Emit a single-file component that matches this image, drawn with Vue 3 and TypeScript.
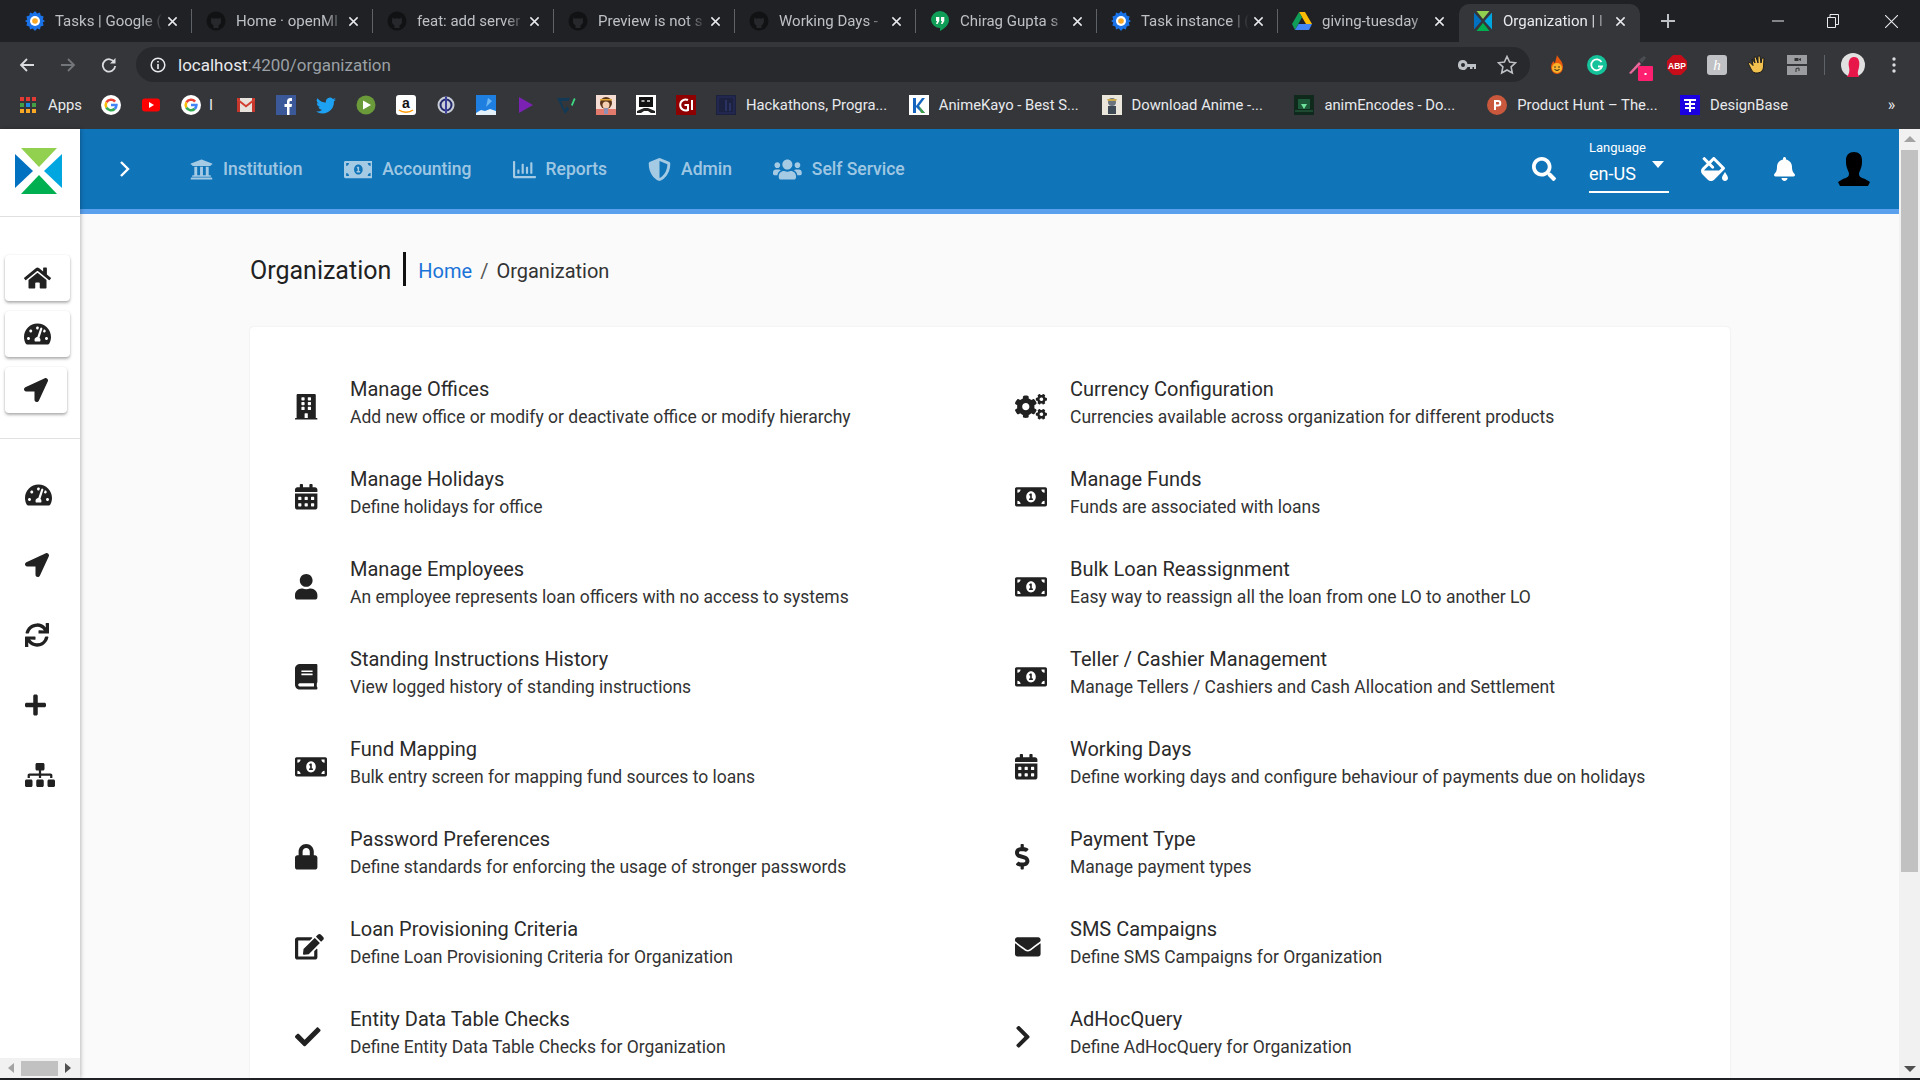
<script setup lang="ts">
import { h } from 'vue'

const paths: Record<string, [number, string]> = {
  home: [576, 'M280.37 148.26L96 300.11V464a16 16 0 0 0 16 16l112.06-.29a16 16 0 0 0 15.92-16V368a16 16 0 0 1 16-16h64a16 16 0 0 1 16 16v95.64a16 16 0 0 0 16 16.05L464 480a16 16 0 0 0 16-16V300L295.67 148.26a12.19 12.19 0 0 0-15.3 0zM571.6 251.47L488 182.56V44.05a12 12 0 0 0-12-12h-56a12 12 0 0 0-12 12v72.61L318.47 43a48 48 0 0 0-61 0L4.34 251.47a12 12 0 0 0-1.6 16.9l25.5 31A12 12 0 0 0 45.15 301l235.22-193.74a12.19 12.19 0 0 1 15.3 0L530.9 301a12 12 0 0 0 16.9-1.6l25.5-31a12 12 0 0 0-1.7-16.93z'],
  gauge: [576, 'M288 32C128.94 32 0 160.94 0 320c0 52.8 14.25 102.26 39.06 144.8 5.61 9.62 16.3 15.2 27.44 15.2h443c11.14 0 21.83-5.58 27.44-15.2C561.75 422.26 576 372.8 576 320c0-159.06-128.94-288-288-288zm0 64c14.71 0 26.58 10.13 30.32 23.65-1.11 2.26-2.64 4.23-3.45 6.67l-9.22 27.67c-5.13 3.49-10.97 6.01-17.64 6.01-17.67 0-32-14.33-32-32S270.33 96 288 96zM96 384c-17.67 0-32-14.33-32-32s14.33-32 32-32 32 14.33 32 32-14.33 32-32 32zm48-160c-17.67 0-32-14.33-32-32s14.33-32 32-32 32 14.33 32 32-14.33 32-32 32zm246.77-72.41l-61.33 184C343.13 347.33 352 364.54 352 384c0 11.72-3.38 22.55-8.88 32H232.88c-5.5-9.45-8.88-20.28-8.88-32 0-33.94 26.5-61.43 59.9-63.59l61.34-184.01c4.17-12.56 17.73-19.45 30.36-15.17 12.57 4.19 19.35 17.79 15.17 30.36zm14.66 57.2l15.52-46.55c3.47-1.29 7.13-2.23 11.05-2.23 17.67 0 32 14.33 32 32s-14.33 32-32 32c-11.38-.01-20.89-6.28-26.57-15.22zM480 384c-17.67 0-32-14.33-32-32s14.33-32 32-32 32 14.33 32 32-14.33 32-32 32z'],
  arrow: [512, 'M444.52 3.52L28.74 195.42c-47.97 22.39-31.98 92.75 19.19 92.75h175.91v175.91c0 51.17 70.36 67.17 92.75 19.19l191.9-415.78c15.99-38.39-25.59-79.97-63.97-63.97z'],
  sync: [512, 'M440.65 12.57l4 82.77A247.16 247.16 0 0 0 255.83 8C134.73 8 33.91 94.92 12.29 209.82A12 12 0 0 0 24.09 224h49.05a12 12 0 0 0 11.67-9.26 175.91 175.91 0 0 1 317-56.94l-101.46-4.86a12 12 0 0 0-12.57 12v47.41a12 12 0 0 0 12 12H500a12 12 0 0 0 12-12V12a12 12 0 0 0-12-12h-47.37a12 12 0 0 0-11.98 12.57zM255.83 432a175.61 175.61 0 0 1-146-77.8l101.8 4.87a12 12 0 0 0 12.57-12v-47.4a12 12 0 0 0-12-12H12a12 12 0 0 0-12 12V500a12 12 0 0 0 12 12h47.35a12 12 0 0 0 12-12.6l-4.15-82.57A247.17 247.17 0 0 0 255.83 504c121.11 0 221.93-86.92 243.55-201.82a12 12 0 0 0-11.8-14.18h-49.05a12 12 0 0 0-11.67 9.26A175.86 175.86 0 0 1 255.83 432z'],
  plus: [448, 'M416 208H272V64c0-17.67-14.33-32-32-32h-32c-17.67 0-32 14.33-32 32v144H32c-17.67 0-32 14.33-32 32v32c0 17.67 14.33 32 32 32h144v144c0 17.67 14.33 32 32 32h32c17.67 0 32-14.33 32-32V304h144c17.67 0 32-14.33 32-32v-32c0-17.67-14.33-32-32-32z'],
  sitemap: [640, 'M128 352H32c-17.67 0-32 14.33-32 32v96c0 17.67 14.33 32 32 32h96c17.67 0 32-14.33 32-32v-96c0-17.67-14.33-32-32-32zm-24-80h192v48h48v-48h192v48h48v-57.59c0-21.17-17.23-38.41-38.41-38.41H344v-64h40c17.67 0 32-14.33 32-32V32c0-17.67-14.33-32-32-32H256c-17.67 0-32 14.33-32 32v96c0 17.67 14.33 32 32 32h40v64H94.41C73.23 224 56 241.23 56 262.41V320h48v-48zm264 80h-96c-17.67 0-32 14.33-32 32v96c0 17.67 14.33 32 32 32h96c17.67 0 32-14.33 32-32v-96c0-17.67-14.33-32-32-32zm240 0h-96c-17.67 0-32 14.33-32 32v96c0 17.67 14.33 32 32 32h96c17.67 0 32-14.33 32-32v-96c0-17.67-14.33-32-32-32z'],
  university: [512, 'M496 128v16a8 8 0 0 1-8 8h-24v12c0 6.627-5.373 12-12 12H60c-6.627 0-12-5.373-12-12v-12H24a8 8 0 0 1-8-8v-16a8 8 0 0 1 4.941-7.392l232-88a7.996 7.996 0 0 1 6.118 0l232 88A8 8 0 0 1 496 128zm-24 304H40c-13.255 0-24 10.745-24 24v16a8 8 0 0 0 8 8h464a8 8 0 0 0 8-8v-16c0-13.255-10.745-24-24-24zM96 192v192H60c-6.627 0-12 5.373-12 12v20h416v-20c0-6.627-5.373-12-12-12h-36V192h-64v192h-64V192h-64v192h-64V192H96z'],
  money: [640, 'M352 288h-16v-88c0-4.42-3.58-8-8-8h-13.58c-4.74 0-9.37 1.4-13.31 4.03l-15.33 10.22a7.994 7.994 0 0 0-2.22 11.09l8.88 13.31a7.994 7.994 0 0 0 11.09 2.22l.47-.31V288h-16c-4.42 0-8 3.58-8 8v16c0 4.42 3.58 8 8 8h64c4.42 0 8-3.58 8-8v-16c0-4.42-3.58-8-8-8zM608 64H32C14.33 64 0 78.33 0 96v320c0 17.67 14.33 32 32 32h576c17.67 0 32-14.33 32-32V96c0-17.67-14.33-32-32-32zM48 400v-64c35.35 0 64 28.65 64 64H48zm0-224v-64h64c0 35.35-28.65 64-64 64zm272 192c-53.02 0-96-50.15-96-112 0-61.86 42.98-112 96-112s96 50.14 96 112c0 61.87-43 112-96 112zm272 32h-64c0-35.35 28.65-64 64-64v64zm0-224c-35.35 0-64-28.65-64-64h64v64z'],
  chart: [512, 'M396.8 352h22.4c6.4 0 12.8-6.4 12.8-12.8V108.8c0-6.4-6.4-12.8-12.8-12.8h-22.4c-6.4 0-12.8 6.4-12.8 12.8v230.4c0 6.4 6.4 12.8 12.8 12.8zm-192 0h22.4c6.4 0 12.8-6.4 12.8-12.8V140.8c0-6.4-6.4-12.8-12.8-12.8h-22.4c-6.4 0-12.8 6.4-12.8 12.8v198.4c0 6.4 6.4 12.8 12.8 12.8zm96 0h22.4c6.4 0 12.8-6.4 12.8-12.8V204.8c0-6.4-6.4-12.8-12.8-12.8h-22.4c-6.4 0-12.8 6.4-12.8 12.8v134.4c0 6.4 6.4 12.8 12.8 12.8zM496 400H48V80c0-8.84-7.16-16-16-16H16C7.16 64 0 71.16 0 80v336c0 17.67 14.33 32 32 32h464c8.84 0 16-7.16 16-16v-16c0-8.84-7.16-16-16-16zm-387.2-48h22.4c6.4 0 12.8-6.4 12.8-12.8v-70.4c0-6.4-6.4-12.8-12.8-12.8h-22.4c-6.4 0-12.8 6.4-12.8 12.8v70.4c0 6.4 6.4 12.8 12.8 12.8z'],
  shield: [512, 'M466.5 83.7l-192-80a48.15 48.15 0 0 0-36.9 0l-192 80C27.7 91.1 16 108.6 16 128c0 198.5 114.5 335.7 221.5 380.3 11.8 4.9 25.1 4.9 36.9 0C360.1 472.6 496 349.3 496 128c0-19.4-11.7-36.9-29.5-44.3zM256.1 446.3l-.1-381 175.9 73.3c-3.3 151.4-82.1 261.1-175.8 307.7z'],
  users: [640, 'M96 224c35.3 0 64-28.7 64-64s-28.7-64-64-64-64 28.7-64 64 28.7 64 64 64zm448 0c35.3 0 64-28.7 64-64s-28.7-64-64-64-64 28.7-64 64 28.7 64 64 64zm32 32h-64c-17.6 0-33.5 7.1-45.1 18.6 40.3 22.1 68.9 62 75.1 109.4h66c17.7 0 32-14.3 32-32v-32c0-35.3-28.7-64-64-64zm-256 0c61.9 0 112-50.1 112-112S381.9 32 320 32 208 82.1 208 144s50.1 112 112 112zm76.8 32h-8.3c-20.8 10-43.9 16-68.5 16s-47.6-6-68.5-16h-8.3C179.6 288 128 339.6 128 403.2V432c0 26.5 21.5 48 48 48h288c26.5 0 48-21.5 48-48v-28.8c0-63.6-51.6-115.2-115.2-115.2zm-223.7-13.4C161.5 263.1 145.6 256 128 256H64c-35.3 0-64 28.7-64 64v32c0 17.7 14.3 32 32 32h65.9c6.3-47.4 34.9-87.3 75.2-109.4z'],
  search: [512, 'M505 442.7L405.3 343c-4.5-4.5-10.6-7-17-7H372c27.6-35.3 44-79.7 44-128C416 93.1 322.9 0 208 0S0 93.1 0 208s93.1 208 208 208c48.3 0 92.7-16.4 128-44v16.3c0 6.4 2.5 12.5 7 17l99.7 99.7c9.4 9.4 24.6 9.4 33.9 0l28.3-28.3c9.4-9.4 9.4-24.6.1-34zM208 336c-70.7 0-128-57.2-128-128 0-70.7 57.2-128 128-128 70.7 0 128 57.2 128 128 0 70.7-57.2 128-128 128z'],
  fill: [576, 'M512 320s-64 92.65-64 128c0 35.35 28.66 64 64 64s64-28.65 64-64-64-128-64-128zm-9.37-102.94L294.94 9.37C288.69 3.12 280.5 0 272.31 0s-16.38 3.12-22.62 9.37l-81.58 81.58L81.93 4.76c-6.25-6.25-16.38-6.25-22.62 0L36.69 27.38c-6.24 6.25-6.24 16.38 0 22.62l86.19 86.18-94.76 94.76c-37.49 37.48-37.49 98.26 0 135.75l117.19 117.19c18.74 18.74 43.31 28.12 67.87 28.12 24.57 0 49.13-9.37 67.87-28.12l221.57-221.57c12.5-12.5 12.5-32.75.01-45.25zm-116.22 70.97H65.93c1.36-3.84 3.57-7.98 7.43-11.83l13.15-13.15 81.61-81.61 58.6 58.6c12.49 12.49 32.75 12.49 45.24 0s12.49-32.75 0-45.24l-58.6-58.6 58.95-58.95 162.44 162.44-48.34 48.34z'],
  bell: [448, 'M224 512c35.32 0 63.97-28.65 63.97-64H160.03c0 35.35 28.65 64 63.97 64zm215.39-149.71c-19.32-20.76-55.47-51.99-55.47-154.29 0-77.7-54.48-139.9-127.94-155.16V32c0-17.67-14.32-32-31.98-32s-31.98 14.33-31.98 32v20.84C118.56 68.1 64.08 130.3 64.08 208c0 102.3-36.15 133.53-55.47 154.29-6 6.45-8.66 14.16-8.61 21.71.11 16.4 12.98 32 32.1 32h383.8c19.12 0 32-15.6 32.1-32 .05-7.55-2.61-15.27-8.61-21.71z'],
  building: [448, 'M436 480h-20V24c0-13.255-10.745-24-24-24H56C42.745 0 32 10.745 32 24v456H12c-6.627 0-12 5.373-12 12v20h448v-20c0-6.627-5.373-12-12-12zM128 76c0-6.627 5.373-12 12-12h40c6.627 0 12 5.373 12 12v40c0 6.627-5.373 12-12 12h-40c-6.627 0-12-5.373-12-12V76zm0 96c0-6.627 5.373-12 12-12h40c6.627 0 12 5.373 12 12v40c0 6.627-5.373 12-12 12h-40c-6.627 0-12-5.373-12-12v-40zm52 148h-40c-6.627 0-12-5.373-12-12v-40c0-6.627 5.373-12 12-12h40c6.627 0 12 5.373 12 12v40c0 6.627-5.373 12-12 12zm76 160h-64v-84c0-6.627 5.373-12 12-12h40c6.627 0 12 5.373 12 12v84zm64-172c0 6.627-5.373 12-12 12h-40c-6.627 0-12-5.373-12-12v-40c0-6.627 5.373-12 12-12h40c6.627 0 12 5.373 12 12v40zm0-96c0 6.627-5.373 12-12 12h-40c-6.627 0-12-5.373-12-12v-40c0-6.627 5.373-12 12-12h40c6.627 0 12 5.373 12 12v40zm0-96c0 6.627-5.373 12-12 12h-40c-6.627 0-12-5.373-12-12V76c0-6.627 5.373-12 12-12h40c6.627 0 12 5.373 12 12v40z'],
  calendar: [448, 'M0 464c0 26.5 21.5 48 48 48h352c26.5 0 48-21.5 48-48V192H0v272zm320-196c0-6.6 5.4-12 12-12h40c6.6 0 12 5.4 12 12v40c0 6.6-5.4 12-12 12h-40c-6.6 0-12-5.4-12-12v-40zm0 128c0-6.6 5.4-12 12-12h40c6.6 0 12 5.4 12 12v40c0 6.6-5.4 12-12 12h-40c-6.6 0-12-5.4-12-12v-40zM192 268c0-6.6 5.4-12 12-12h40c6.6 0 12 5.4 12 12v40c0 6.6-5.4 12-12 12h-40c-6.6 0-12-5.4-12-12v-40zm0 128c0-6.6 5.4-12 12-12h40c6.6 0 12 5.4 12 12v40c0 6.6-5.4 12-12 12h-40c-6.6 0-12-5.4-12-12v-40zM64 268c0-6.6 5.4-12 12-12h40c6.6 0 12 5.4 12 12v40c0 6.6-5.4 12-12 12H76c-6.6 0-12-5.4-12-12v-40zm0 128c0-6.6 5.4-12 12-12h40c6.6 0 12 5.4 12 12v40c0 6.6-5.4 12-12 12H76c-6.6 0-12-5.4-12-12v-40zM400 64h-48V16c0-8.8-7.2-16-16-16h-32c-8.8 0-16 7.2-16 16v48H160V16c0-8.8-7.2-16-16-16h-32c-8.8 0-16 7.2-16 16v48H48C21.5 64 0 85.5 0 112v48h448v-48c0-26.5-21.5-48-48-48z'],
  user: [448, 'M224 256c70.7 0 128-57.3 128-128S294.7 0 224 0 96 57.3 96 128s57.3 128 128 128zm89.6 32h-16.7c-22.2 10.2-46.9 16-72.9 16s-50.6-5.8-72.9-16h-16.7C60.2 288 0 348.2 0 422.4V464c0 26.5 21.5 48 48 48h352c26.5 0 48-21.5 48-48v-41.6c0-74.2-60.2-134.4-134.4-134.4z'],
  book: [448, 'M448 360V24c0-13.3-10.7-24-24-24H96C43 0 0 43 0 96v320c0 53 43 96 96 96h328c13.3 0 24-10.7 24-24v-16c0-7.5-3.5-14.3-8.9-18.7-4.2-15.4-4.2-59.3 0-74.7 5.4-4.3 8.9-11.1 8.9-18.6zM128 134c0-3.3 2.7-6 6-6h212c3.3 0 6 2.7 6 6v20c0 3.3-2.7 6-6 6H134c-3.3 0-6-2.7-6-6v-20zm0 64c0-3.3 2.7-6 6-6h212c3.3 0 6 2.7 6 6v20c0 3.3-2.7 6-6 6H134c-3.3 0-6-2.7-6-6v-20zm253.4 250H96c-17.7 0-32-14.3-32-32 0-17.6 14.4-32 32-32h285.4c-1.9 17.1-1.9 46.9 0 64z'],
  lock: [448, 'M400 224h-24v-72C376 68.2 307.8 0 224 0S72 68.2 72 152v72H48c-26.5 0-48 21.5-48 48v192c0 26.5 21.5 48 48 48h352c26.5 0 48-21.5 48-48V272c0-26.5-21.5-48-48-48zm-104 0H152v-72c0-39.7 32.3-72 72-72s72 32.3 72 72v72z'],
  edit: [576, 'M402.6 83.2l90.2 90.2c3.8 3.8 3.8 10 0 13.8L274.4 405.6l-92.8 10.3c-12.4 1.4-22.9-9.1-21.5-21.5l10.3-92.8L388.8 83.2c3.8-3.8 10-3.8 13.8 0zm162-22.9l-48.8-48.8c-15.2-15.2-39.9-15.2-55.2 0l-35.4 35.4c-3.8 3.8-3.8 10 0 13.8l90.2 90.2c3.8 3.8 10 3.8 13.8 0l35.4-35.4c15.2-15.3 15.2-40 0-55.2zM384 346.2V448H64V128h229.8c3.2 0 6.2-1.3 8.5-3.5l40-40c7.6-7.6 2.2-20.5-8.5-20.5H48C21.5 64 0 85.5 0 112v352c0 26.5 21.5 48 48 48h352c26.5 0 48-21.5 48-48V306.2c0-10.7-12.9-16-20.5-8.5l-40 40c-2.2 2.3-3.5 5.3-3.5 8.5z'],
  check: [512, 'M173.898 439.404l-166.4-166.4c-9.997-9.997-9.997-26.206 0-36.204l36.203-36.204c9.997-9.998 26.207-9.998 36.204 0L192 312.69 432.095 72.596c9.997-9.997 26.207-9.997 36.204 0l36.203 36.204c9.997 9.997 9.997 26.206 0 36.204l-294.4 294.401c-9.998 9.997-26.207 9.997-36.204-.001z'],
  cogs: [640, 'M512.1 191l-8.2 14.3c-3 5.3-9.4 7.5-15.1 5.4-11.8-4.4-22.6-10.7-32.1-18.6-4.6-3.8-5.8-10.5-2.8-15.7l8.2-14.3c-6.9-8-12.3-17.3-15.9-27.4h-16.5c-6 0-11.2-4.3-12.2-10.3-2-12-2.1-24.6 0-37.1 1-6 6.2-10.4 12.2-10.4h16.5c3.6-10.1 9-19.4 15.9-27.4l-8.2-14.3c-3-5.2-1.9-11.9 2.8-15.7 9.5-7.9 20.4-14.2 32.1-18.6 5.7-2.1 12.1.1 15.1 5.4l8.2 14.3c10.5-1.9 21.2-1.9 31.7 0L552 6.3c3-5.3 9.4-7.5 15.1-5.4 11.8 4.4 22.6 10.7 32.1 18.6 4.6 3.8 5.8 10.5 2.8 15.7l-8.2 14.3c6.9 8 12.3 17.3 15.9 27.4h16.5c6 0 11.2 4.3 12.2 10.3 2 12 2.1 24.6 0 37.1-1 6-6.2 10.4-12.2 10.4h-16.5c-3.6 10.1-9 19.4-15.9 27.4l8.2 14.3c3 5.2 1.9 11.9-2.8 15.7-9.5 7.9-20.4 14.2-32.1 18.6-5.7 2.1-12.1-.1-15.1-5.4l-8.2-14.3c-10.4 1.9-21.2 1.9-31.7 0zm-10.5-58.8c38.5 29.6 82.4-14.3 52.8-52.8-38.5-29.7-82.4 14.3-52.8 52.8zM386.3 286.1l33.7 16.8c10.1 5.8 14.5 18.1 10.5 29.1-8.9 24.2-26.4 46.4-42.6 65.8-7.4 8.9-20.2 11.1-30.3 5.3l-29.1-16.8c-16 13.7-34.6 24.6-54.9 31.7v33.6c0 11.6-8.3 21.6-19.7 23.6-24.6 4.2-50.4 4.4-75.9 0-11.5-2-20-11.9-20-23.6V418c-20.3-7.2-38.9-18-54.9-31.7L74 403c-10 5.8-22.9 3.6-30.3-5.3-16.2-19.4-33.3-41.6-42.2-65.7-4-10.9.4-23.2 10.5-29.1l33.3-16.8c-3.9-20.9-3.9-42.4 0-63.4L12 205.8c-10.1-5.8-14.6-18.1-10.5-29 8.9-24.2 26-46.4 42.2-65.8 7.4-8.9 20.2-11.1 30.3-5.3l29.1 16.8c16-13.7 34.6-24.6 54.9-31.7V57.1c0-11.5 8.2-21.5 19.6-23.5 24.6-4.2 50.5-4.4 76-.1 11.5 2 20 11.9 20 23.6v33.6c20.3 7.2 38.9 18 54.9 31.7l29.1-16.8c10-5.8 22.9-3.6 30.3 5.3 16.2 19.4 33.2 41.6 42.1 65.8 4 10.9.1 23.2-10 29.1l-33.7 16.8c3.9 21 3.9 42.5 0 63.5zm-117.6 21.1c59.2-77-28.7-164.9-105.7-105.7-59.2 77 28.7 164.9 105.7 105.7zm243.4 182.7l-8.2 14.3c-3 5.3-9.4 7.5-15.1 5.4-11.8-4.4-22.6-10.7-32.1-18.6-4.6-3.8-5.8-10.5-2.8-15.7l8.2-14.3c-6.9-8-12.3-17.3-15.9-27.4h-16.5c-6 0-11.2-4.3-12.2-10.3-2-12-2.1-24.6 0-37.1 1-6 6.2-10.4 12.2-10.4h16.5c3.6-10.1 9-19.4 15.9-27.4l-8.2-14.3c-3-5.2-1.9-11.9 2.8-15.7 9.5-7.9 20.4-14.2 32.1-18.6 5.7-2.1 12.1.1 15.1 5.4l8.2 14.3c10.5-1.9 21.2-1.9 31.7 0l8.2-14.3c3-5.3 9.4-7.5 15.1-5.4 11.8 4.4 22.6 10.7 32.1 18.6 4.6 3.8 5.8 10.5 2.8 15.7l-8.2 14.3c6.9 8 12.3 17.3 15.9 27.4h16.5c6 0 11.2 4.3 12.2 10.3 2 12 2.1 24.6 0 37.1-1 6-6.2 10.4-12.2 10.4h-16.5c-3.6 10.1-9 19.4-15.9 27.4l8.2 14.3c3 5.2 1.9 11.9-2.8 15.7-9.5 7.9-20.4 14.2-32.1 18.6-5.7 2.1-12.1-.1-15.1-5.4l-8.2-14.3c-10.4 1.9-21.2 1.9-31.7 0zM501.6 431c38.5 29.6 82.4-14.3 52.8-52.8-38.5-29.6-82.4 14.3-52.8 52.8z'],
  dollar: [288, 'M209.2 233.4l-108-31.6C88.7 198.2 80 186.5 80 173.5c0-16.3 13.2-29.5 29.5-29.5h66.3c12.2 0 24.2 3.7 34.2 10.5 6.1 4.1 14.3 3.1 19.5-2l34.8-34c7.1-6.9 6.1-18.4-1.8-24.5C238 74.8 207.4 64.1 176 64V16c0-8.8-7.2-16-16-16h-32c-8.8 0-16 7.2-16 16v48h-2.5C45.8 64-5.4 118.7.5 183.6c4.2 46.1 39.4 83.6 83.8 96.6l102.5 30c12.5 3.7 21.2 15.3 21.2 28.3 0 16.3-13.2 29.5-29.5 29.5h-66.3C100 368 88 364.3 78 357.5c-6.1-4.1-14.3-3.1-19.5 2l-34.8 34c-7.1 6.9-6.1 18.4 1.8 24.5 24.5 19.2 55.1 29.9 86.5 30v48c0 8.8 7.2 16 16 16h32c8.8 0 16-7.2 16-16v-48.2c46.6-.9 90.3-28.6 105.7-72.7 21.5-61.6-14.6-124.8-72.5-141.7z'],
  envelope: [512, 'M502.3 190.8c3.9-3.1 9.7-.2 9.7 4.7V400c0 26.5-21.5 48-48 48H48c-26.5 0-48-21.5-48-48V195.6c0-5 5.7-7.8 9.7-4.7 22.4 17.4 52.1 39.5 154.1 113.6 21.1 15.4 56.7 47.8 92.2 47.6 35.7.3 72-32.8 92.3-47.6 102-74.1 131.6-96.3 154-113.7zM256 320c23.2.4 56.6-29.2 73.4-41.4 132.7-96.3 142.8-104.7 173.4-128.7 5.8-4.5 9.2-11.5 9.2-18.9v-19c0-26.5-21.5-48-48-48H48C21.5 64 0 85.5 0 112v19c0 7.4 3.4 14.3 9.2 18.9 30.6 23.9 40.7 32.4 173.4 128.7 16.8 12.2 50.2 41.8 73.4 41.4z'],
  chevron: [320, 'M285.476 272.971L91.132 467.314c-9.373 9.373-24.569 9.373-33.941 0l-22.667-22.667c-9.357-9.357-9.375-24.522-.04-33.901L188.505 256 34.484 101.255c-9.335-9.379-9.317-24.544.04-33.901l22.667-22.667c9.373-9.373 24.569-9.373 33.941 0L285.475 239.03c9.373 9.372 9.373 24.568.001 33.941z'],
}

// small icon drawn from the table above, height comes from the class
const Fa = (props: { name: string }) =>
  h('svg', { viewBox: `0 0 ${paths[props.name][0]} 512`, fill: 'currentColor', preserveAspectRatio: 'xMinYMid meet' }, [h('path', { d: paths[props.name][1] })])
Fa.props = ['name']

const G = '<circle cx="10" cy="10" r="10" fill="#fff"/><g fill="none" stroke-width="2.6"><path d="M14.1 6.6A5.4 5.4 0 0 0 5.4 7.4" stroke="#ea4335"/><path d="M5.4 7.4a5.4 5.4 0 0 0 0 5.2" stroke="#fbbc05"/><path d="M5.4 12.6a5.4 5.4 0 0 0 8.4 1.2" stroke="#34a853"/><path d="M13.8 13.8a5.4 5.4 0 0 0 1.6-3.8H10" stroke="#4285f4"/></g>'
const gear = '<path d="M10 0l2.2 2.6L15 1.6l.6 3 3 .9-.8 2.9L20 10l-2.2 1.6.8 2.9-3 .9-.6 3-2.8-1-2.2 2.6-2.2-2.6-2.8 1-.6-3-3-.9.8-2.9L0 10l2.2-1.6-.8-2.9 3-.9.6-3 2.8 1z" fill="#1a73e8"/><circle cx="10" cy="10" r="5" fill="#fff"/><circle cx="10" cy="10" r="2.8" fill="#f9a825"/>'
const cat = '<circle cx="10" cy="10" r="9.5" fill="#101214"/><path d="M5.5 6.5l2 1.2a7 7 0 0 1 5 0l2-1.2.5 3a5 5 0 0 1-2.5 5v2.5h-5v-2.5A5 5 0 0 1 5 9.500z" fill="#26282b"/>'
const logo = '<path d="M3.500 0h13L10 8z" fill="#92d050"/><path d="M3.500 20h13L10 12z" fill="#00b050"/><path d="M1 1.500v17L8.500 10z" fill="#0070c0"/><path d="M19 1.500v17L11.500 10z" fill="#00a6e0"/>'

const favs: Record<string, string> = {
  gear,
  cat,
  logo,
  G,
  hangouts: '<path d="M10 0a9 9 0 0 0-9 9 9 9 0 0 0 9 8v3c5-2.500 9-6.500 9-11a9 9 0 0 0-9-9z" fill="#0f9d58"/><path d="M6 6h3.300v4L7.500 13H6l1-3H6zM11 6h3.300v4l-1.800 3H11l1-3h-1z" fill="#fff"/>',
  drive: '<path d="M7 1h6l7 12h-6z" fill="#fbbc05"/><path d="M7 1l3 5.200L3 19l-3-6z" fill="#0f9d58"/><path d="M3 19l3.500-6H20l-3 6z" fill="#4285f4"/>',
  youtube: '<rect x="1" y="3.500" width="18" height="13" rx="3" fill="#f00"/><path d="M8 7l5 3-5 3z" fill="#fff"/>',
  gmail: '<rect x="1" y="3" width="18" height="14" fill="#e8e2dc"/><path d="M1 3h3v14H1zM16 3h3v14h-3z" fill="#c5362c"/><path d="M1 3l9 7 9-7v2.500L10 12.500 1 5.500z" fill="#d23f31"/>',
  facebook: '<rect width="20" height="20" fill="#3b5998"/><path d="M11 20v-8H8.500V9H11V6.500C11 4 12.500 3 14.500 3H16v3h-1.200c-.9 0-1.300.4-1.300 1.200V9H16l-.4 3h-2.100v8z" fill="#fff"/>',
  twitter: '<path d="M20 4.500a8 8 0 0 1-2.300.6 4 4 0 0 0 1.800-2.200 8 8 0 0 1-2.600 1A4 4 0 0 0 10 7.500 11.500 11.500 0 0 1 1.400 3.200a4 4 0 0 0 1.300 5.400 4 4 0 0 1-1.800-.5A4 4 0 0 0 4.100 12a4 4 0 0 1-1.800.1A4 4 0 0 0 6 14.900 8 8 0 0 1 0 16.500 11.500 11.500 0 0 0 17.900 6.300 8 8 0 0 0 20 4.500z" fill="#1da1f2"/>',
  play: '<circle cx="10" cy="10" r="9.500" fill="#6a9a3a"/><path d="M7 5.500l8 4.500-8 4.500z" fill="#fff"/>',
  amazon: '<rect width="20" height="20" rx="3" fill="#fff"/><text x="10" y="13" text-anchor="middle" font-family="Liberation Sans" font-weight="700" font-size="14" fill="#111">a</text><path d="M3 15c4 3 10 3 14 0" fill="none" stroke="#f90" stroke-width="1.500"/>',
  at: '<circle cx="10" cy="10" r="8.500" fill="#c9cdd6"/><circle cx="10" cy="10" r="5.500" fill="none" stroke="#232a6b" stroke-width="2"/><path d="M10 1.500v17" stroke="#3a3f9c" stroke-width="2"/>',
  blue: '<rect width="20" height="20" fill="#1f7fe0"/><path d="M0 20v-2l5-3 4 1 5-2 6 2v4z" fill="#e4f1fb"/><path d="M12 3l4 3-6 6z" fill="#6cb6f2"/>',
  purple: '<path d="M3 2l14 8-14 8z" fill="#7b22b4"/>',
  vee: '<path d="M1 3h13l-1.500 3H5l4 9 2-4 2 3-4 5z" fill="#123a56"/><path d="M15 10l3-7 1.500 1-3 7z" fill="#3ddc84"/>',
  anime: '<rect width="20" height="20" fill="#f4dcd2"/><rect y="14" width="20" height="6" fill="#e27a6e"/><circle cx="10" cy="8" r="6" fill="#5b3418"/><circle cx="10" cy="10" r="3.500" fill="#f5cfb2"/><path d="M4 4h12v1.500H4z" fill="#e0a93a"/><rect x="8" y="13" width="4" height="6" fill="#8d8fb3"/>',
  monitor: '<rect width="20" height="20" fill="#fff"/><rect x="3" y="2" width="14" height="10" fill="#111"/><path d="M5.500 6h3M11 6h3" stroke="#ddd" stroke-width="1.500"/><path d="M1 16l7-3h4l7 3v2h-4l-3-2H8l-3 2H1z" fill="#222"/>',
  gi: '<rect width="20" height="20" fill="#8f0000"/><path d="M12 5A5.500 5.500 0 1 0 12 15V10H8.500" fill="none" stroke="#fff" stroke-width="2"/><path d="M16 5v10" stroke="#fff" stroke-width="2"/>',
  dark: '<rect width="20" height="20" fill="#1c2140"/><rect x="2" y="2" width="16" height="16" fill="none" stroke="#242a55" stroke-width="1.500"/><path d="M10 5v11M14 8v8" stroke="#2a3163" stroke-width="2"/>',
  kayo: '<rect width="20" height="20" fill="#fff"/><path d="M4 3h3v8l6-8h3l-6 8 6 7h-3L7 12v6H4z" fill="#1565c0"/><path d="M10 11l6 7h-4z" fill="#43a047"/>',
  download: '<rect width="20" height="20" fill="#ebe6dc"/><circle cx="10" cy="7" r="4" fill="#69747f"/><path d="M5 4h10l-1 2H6z" fill="#c9a94a"/><rect x="6" y="11" width="8" height="8" fill="#3f4a57"/>',
  enc: '<rect width="20" height="20" fill="#0f2a1c"/><rect x="4" y="4" width="12" height="10" fill="#1e5a39"/><path d="M7 9l3 5 3-5z" fill="#6fe39c"/><path d="M1 16h18" stroke="#2d6b47"/>',
  ph: '<circle cx="10" cy="10" r="10" fill="#c9583c"/><path d="M7 5h4a3.300 3.300 0 0 1 0 6.600H9V15H7zM9 7v2.600h2A1.300 1.300 0 0 0 11 7z" fill="#fff"/>',
  base: '<rect width="20" height="20" fill="#1a00e0"/><path d="M4 4h12v2h-5v2h4v2h-4v2h4v2h-4v3H9v-3H5v-2h4v-2H5V8h4V6H4z" fill="#fff"/>',
  flame: '<path d="M10 0c1 3 6 6 6 12a6 7 0 0 1-12 0c0-3 1.500-4.500 2.500-6 .5 1.500 1 2 1.500 2C8.500 5 9.500 3 10 0z" fill="#e8590c"/><circle cx="10" cy="13" r="5" fill="#f7b32b"/><circle cx="8" cy="12" r=".8" fill="#222"/><circle cx="12" cy="12" r=".8" fill="#222"/><path d="M7.500 14.500q2.500 2 5 0" stroke="#222" fill="none"/>',
  grammarly: '<circle cx="10" cy="10" r="10" fill="#15c39a"/><path d="M14.500 7A5.500 5.500 0 1 0 15 11.500h-4" fill="none" stroke="#fff" stroke-width="1.800"/>',
  dropper: '<path d="M2 18L12 7l2 2L4 19z" fill="#e56b9d"/><path d="M12 5l5-4 2 2-4 5z" fill="#4a4d52"/><rect x="11" y="11" width="15" height="15" rx="1" fill="#ff1f70"/><rect x="17.500" y="18" width="2" height="2" fill="#fff"/>',
  abp: '<path d="M6 0h8l6 6v8l-6 6H6l-6-6V6z" fill="#c70d1a"/><text x="10" y="13.500" text-anchor="middle" font-family="Liberation Sans" font-weight="700" font-size="8.500" fill="#fff">ABP</text>',
  honey: '<rect width="20" height="20" rx="3" fill="#bfc1c4"/><text x="10" y="15" text-anchor="middle" font-family="Liberation Serif" font-style="italic" font-size="15" fill="#fff">h</text>',
  hand: '<path d="M5 4l3 4-1-6 2 0 2 6 0-7 2 0 1 7 1-5 2 0-.500 9A6.500 6.500 0 0 1 4 14L1 8l2-.500 3 3z" fill="#f2c14e" stroke="#1c1c1c" stroke-width="1"/>',
  media: '<rect x="0" y="0" width="20" height="9" fill="#9a9c9f"/><rect x="0" y="11" width="20" height="9" fill="#9a9c9f"/><path d="M7.500 3h4v3h-4zM12 4l2-1v3l-2-1z" fill="#333"/><path d="M9 17v-3.500l3-.5v3" fill="none" stroke="#333"/>',
  profile: '<circle cx="12" cy="12" r="12" fill="#e0e0e0"/><path d="M6 24c2-3 3-6 2-10s0-10 5-10 6 5 5 10-2 5 0 10z" fill="#e8174a"/>',
}

const tabs = [
  { title: 'Tasks | Google (', icon: 'gear' },
  { title: 'Home · openMI', icon: 'cat' },
  { title: 'feat: add server', icon: 'cat' },
  { title: 'Preview is not s', icon: 'cat' },
  { title: 'Working Days -', icon: 'cat' },
  { title: 'Chirag Gupta s', icon: 'hangouts' },
  { title: 'Task instance | (', icon: 'gear' },
  { title: 'giving-tuesday', icon: 'drive' },
  { title: 'Organization | I', icon: 'logo', active: true },
]

const marks = ['G', 'youtube', 'G', 'gmail', 'facebook', 'twitter', 'play', 'amazon', 'at', 'blue', 'purple', 'vee', 'anime', 'monitor', 'gi']
const named = [
  { icon: 'dark', label: 'Hackathons, Progra...' },
  { icon: 'kayo', label: 'AnimeKayo - Best S...' },
  { icon: 'download', label: 'Download Anime -...' },
  { icon: 'enc', label: 'animEncodes - Do...' },
  { icon: 'ph', label: 'Product Hunt – The...' },
  { icon: 'base', label: 'DesignBase' },
]
const extensions = ['flame', 'grammarly', 'dropper', 'abp', 'honey', 'hand', 'media']

const nav = [
  { icon: 'university', label: 'Institution' },
  { icon: 'money', label: 'Accounting' },
  { icon: 'chart', label: 'Reports' },
  { icon: 'shield', label: 'Admin' },
  { icon: 'users', label: 'Self Service' },
]

const items = [
  { icon: 'building', title: 'Manage Offices', sub: 'Add new office or modify or deactivate office or modify hierarchy' },
  { icon: 'cogs', title: 'Currency Configuration', sub: 'Currencies available across organization for different products' },
  { icon: 'calendar', title: 'Manage Holidays', sub: 'Define holidays for office' },
  { icon: 'money', title: 'Manage Funds', sub: 'Funds are associated with loans' },
  { icon: 'user', title: 'Manage Employees', sub: 'An employee represents loan officers with no access to systems' },
  { icon: 'money', title: 'Bulk Loan Reassignment', sub: 'Easy way to reassign all the loan from one LO to another LO' },
  { icon: 'book', title: 'Standing Instructions History', sub: 'View logged history of standing instructions' },
  { icon: 'money', title: 'Teller / Cashier Management', sub: 'Manage Tellers / Cashiers and Cash Allocation and Settlement' },
  { icon: 'money', title: 'Fund Mapping', sub: 'Bulk entry screen for mapping fund sources to loans' },
  { icon: 'calendar', title: 'Working Days', sub: 'Define working days and configure behaviour of payments due on holidays' },
  { icon: 'lock', title: 'Password Preferences', sub: 'Define standards for enforcing the usage of stronger passwords' },
  { icon: 'dollar', title: 'Payment Type', sub: 'Manage payment types' },
  { icon: 'edit', title: 'Loan Provisioning Criteria', sub: 'Define Loan Provisioning Criteria for Organization' },
  { icon: 'envelope', title: 'SMS Campaigns', sub: 'Define SMS Campaigns for Organization' },
  { icon: 'check', title: 'Entity Data Table Checks', sub: 'Define Entity Data Table Checks for Organization' },
  { icon: 'chevron', title: 'AdHocQuery', sub: 'Define AdHocQuery for Organization' },
]

const railButtons = ['home', 'gauge', 'arrow']
const railIcons = ['gauge', 'arrow', 'sync', 'plus', 'sitemap']
</script>

<template>
  <div class="screen">
    <div class="tabstrip">
      <div v-for="(t, i) in tabs" :key="i" class="tab" :class="{ active: t.active, nosep: i >= 7 }">
        <svg class="fav" viewBox="0 0 20 20" v-html="favs[t.icon]"></svg>
        <span class="tab-title">{{ t.title }}</span>
        <svg class="tab-x" viewBox="0 0 12 12"><path d="M1.500 1.500l9 9M10.500 1.500l-9 9" stroke="currentColor" stroke-width="1.600" /></svg>
      </div>
      <svg class="new-tab" viewBox="0 0 14 14"><path d="M7 0v14M0 7h14" stroke="#bdc1c6" stroke-width="2" /></svg>
      <div class="win">
        <svg viewBox="0 0 12 12" class="win-min"><path d="M0 6h12" stroke="#e8eaed" /></svg>
        <svg viewBox="0 0 12 14" class="win-max"><path d="M.5 3.500h8v10h-8zM3 3.500V.5h8.500v10H8.500" fill="none" stroke="#e8eaed" /></svg>
        <svg viewBox="0 0 12 12" class="win-close"><path d="M0 0l12 12M12 0L0 12" stroke="#e8eaed" /></svg>
      </div>
    </div>

    <div class="toolbar">
      <svg class="tool" viewBox="0 0 16 16"><path d="M15 8H2M8 2L2 8l6 6" fill="none" stroke="#dadce0" stroke-width="1.800" /></svg>
      <svg class="tool" viewBox="0 0 16 16"><path d="M1 8h13M8 2l6 6-6 6" fill="none" stroke="#73767a" stroke-width="1.800" /></svg>
      <svg class="tool" viewBox="0 0 16 16"><path d="M13.500 5.500A6.200 6.200 0 1 0 14.200 9" fill="none" stroke="#dadce0" stroke-width="1.800" /><path d="M14.500 1v5.500H9z" fill="#dadce0" /></svg>
      <div class="omnibox">
        <svg class="info" viewBox="0 0 16 16"><circle cx="8" cy="8" r="6.800" fill="none" stroke="#e8eaed" stroke-width="1.500" /><path d="M8 7v5M8 4v1.600" stroke="#e8eaed" stroke-width="1.600" /></svg>
        <span class="url"><b>localhost</b>:4200/organization</span>
        <svg class="key" viewBox="0 0 18 12"><path d="M5 1a5 5 0 1 0 4.500 7H12v2h2.500V8H16v2h2V5H9.500A5 5 0 0 0 5 1zm0 3a2 2 0 1 1 0 4 2 2 0 0 1 0-4z" fill="#bdc1c6" /></svg>
        <svg class="star" viewBox="0 0 20 20"><path d="M10 1.500l2.600 5.600 6 .7-4.500 4.100 1.200 6L10 15l-5.300 2.900 1.200-6L1.400 7.800l6-.7z" fill="none" stroke="#bdc1c6" stroke-width="1.600" /></svg>
      </div>
      <div v-for="e in extensions" :key="e" class="ext">
        <svg class="fav" :class="{ spill: e === 'dropper' }" viewBox="0 0 20 20" v-html="favs[e]"></svg>
      </div>
      <span class="tool-sep"></span>
      <svg class="avatar" viewBox="0 0 24 24" v-html="favs.profile"></svg>
      <svg class="dots" viewBox="0 0 4 16"><circle cx="2" cy="2" r="1.700" fill="#dadce0" /><circle cx="2" cy="8" r="1.700" fill="#dadce0" /><circle cx="2" cy="14" r="1.700" fill="#dadce0" /></svg>
    </div>

    <div class="bookmarks">
      <svg class="apps" viewBox="0 0 16 16">
        <g v-for="(c, r) in ['#e53935', '#43a047', '#f9a825']" :key="r">
          <rect v-for="k in 3" :key="k" :x="(k - 1) * 6" :y="r * 6" width="4" height="4" :fill="r === 1 && k === 2 ? '#1e88e5' : c" />
        </g>
      </svg>
      <span class="apps-label">Apps</span>
      <div v-for="(m, i) in marks" :key="i" class="mark" :class="{ wide: i === 2 }">
        <svg class="fav" viewBox="0 0 20 20" v-html="favs[m]"></svg>
        <span v-if="i === 2" class="one">I</span>
      </div>
      <div v-for="n in named" :key="n.label" class="named">
        <svg class="fav" viewBox="0 0 20 20" v-html="favs[n.icon]"></svg>
        <span>{{ n.label }}</span>
      </div>
      <span class="more">»</span>
    </div>

    <div class="page">
      <aside class="rail">
        <div class="rail-logo">
          <svg class="logo" viewBox="0 0 47 46">
            <path d="M6 0h36L24 19z" fill="#92d050" />
            <path d="M6 46h36L24 27z" fill="#00b050" />
            <path d="M0 6v34l18-17z" fill="#0070c0" />
            <path d="M47 6v34L29 23z" fill="#00a6e0" />
          </svg>
        </div>
        <div class="rail-buttons">
          <div v-for="b in railButtons" :key="b" class="rail-btn"><Fa :name="b" class="rail-icon" /></div>
        </div>
        <div class="rail-list">
          <Fa v-for="r in railIcons" :key="r" :name="r" class="rail-icon" />
        </div>
        <div class="hbar">
          <span class="arrow-left"></span>
          <span class="hthumb"></span>
          <span class="arrow-right"></span>
        </div>
      </aside>

      <main class="main">
        <header class="topbar">
          <svg class="toggle" viewBox="0 0 11 16"><path d="M2 1l7 7-7 7" fill="none" stroke="#fff" stroke-width="2.400" /></svg>
          <nav class="nav">
            <a v-for="n in nav" :key="n.label" class="nav-item"><Fa :name="n.icon" class="nav-icon" />{{ n.label }}</a>
          </nav>
          <div class="actions">
            <Fa name="search" class="act search" />
            <div class="lang">
              <span class="lang-label">Language</span>
              <span class="lang-value">en-US</span>
              <span class="caret"></span>
            </div>
            <Fa name="fill" class="act fill" />
            <Fa name="bell" class="act bell" />
            <svg class="person" viewBox="0 0 32 34"><path d="M16 0c5 0 8 3 8 8 0 3 0 5-1 8-1 3-2 4-2 6 0 3 3 4 6 5l5 3-2 4H2L0 30l5-3c3-1 6-2 6-5 0-2-1-3-2-6-1-3-1-5-1-8 0-5 3-8 8-8z" fill="#000" /></svg>
          </div>
        </header>

        <div class="content">
          <div class="crumbs">
            <h1 class="page-title">Organization</h1>
            <a class="crumb-home">Home</a>
            <span class="crumb-sep">/</span>
            <span class="crumb-current">Organization</span>
          </div>
          <section class="card">
            <div v-for="it in items" :key="it.title" class="row">
              <Fa :name="it.icon" class="row-icon" />
              <div class="row-text">
                <div class="row-title">{{ it.title }}</div>
                <div class="row-sub">{{ it.sub }}</div>
              </div>
            </div>
          </section>
        </div>
      </main>

      <div class="vbar">
        <span class="arrow-up"></span>
        <span class="vthumb"></span>
        <span class="arrow-down"></span>
      </div>
    </div>
    <div class="taskbar"></div>
  </div>
</template>

<style>
html,
body {
  margin: 0;
  overflow: hidden;
}
</style>

<style scoped>
.screen {
  width: 1920px;
  height: 1080px;
  display: flex;
  flex-direction: column;
  overflow: hidden;
  font-family: Roboto, 'Liberation Sans', sans-serif;
  background: #202124;
}

.fav {
  width: 20px;
  height: 20px;
  flex: none;
}

/* browser chrome */
.tabstrip {
  height: 42px;
  display: flex;
  align-items: center;
  padding-left: 11px;
  background: #202124;
  flex: none;
}

.tab {
  position: relative;
  width: 181px;
  height: 42px;
  box-sizing: border-box;
  padding-left: 14px;
  display: flex;
  align-items: center;
  color: #bdc1c6;
  font-size: 15px;
  flex: none;
}

.tab::after {
  content: '';
  position: absolute;
  right: 0;
  top: 9px;
  height: 24px;
  width: 1px;
  background: #5f6368;
}

.tab.nosep::after {
  display: none;
}

.tab.active {
  background: #35363a;
  color: #e8eaed;
  border-radius: 10px 10px 0 0;
  margin-top: 4px;
  height: 38px;
  padding-bottom: 4px;
}

.tab-title {
  width: 108px;
  margin-left: 10px;
  white-space: nowrap;
  overflow: hidden;
  -webkit-mask-image: linear-gradient(90deg, #000 82%, transparent);
  mask-image: linear-gradient(90deg, #000 82%, transparent);
}

.tab-x {
  width: 11px;
  height: 11px;
  margin-left: 4px;
  color: #e8eaed;
}

.new-tab {
  width: 14px;
  height: 14px;
  margin-left: 21px;
}

.win {
  margin-left: auto;
  display: flex;
  align-items: center;
  padding-right: 22px;
}

.win svg {
  width: 12px;
  height: 12px;
}

.win .win-max {
  height: 14px;
  margin: 0 46px 0 43px;
}

.win .win-close {
  width: 13px;
  height: 13px;
}

.toolbar {
  height: 42px;
  flex: none;
  box-sizing: border-box;
  padding: 3px 0 0 19px;
  background: #35363a;
  display: flex;
  align-items: center;
}

.tool {
  width: 16px;
  height: 16px;
  margin-right: 25px;
  flex: none;
}

.omnibox {
  width: 1394px;
  height: 35px;
  margin: 0 7px 0 -6px;
  flex: none;
  box-sizing: border-box;
  border-radius: 18px;
  background: #28292c;
  display: flex;
  align-items: center;
  padding-left: 14px;
}

.info {
  width: 16px;
  height: 16px;
}

.url {
  margin-left: 12px;
  font-size: 17px;
  color: #9aa0a6;
}

.url b {
  font-weight: 400;
  color: #e8eaed;
}

.key {
  width: 18px;
  height: 12px;
  margin-left: auto;
}

.star {
  width: 20px;
  height: 20px;
  margin: 0 13px 0 21px;
}

.ext {
  width: 40px;
  flex: none;
  display: flex;
  justify-content: center;
}

.fav.spill {
  overflow: visible;
}

.tool-sep {
  width: 1px;
  height: 20px;
  background: #5f6368;
  margin: 0 16px 0 7px;
}

.avatar {
  width: 24px;
  height: 24px;
}

.dots {
  width: 4px;
  height: 16px;
  margin-left: 27px;
}

.bookmarks {
  height: 45px;
  flex: none;
  box-sizing: border-box;
  padding: 0 0 4px 20px;
  background: #35363a;
  display: flex;
  align-items: center;
  color: #e8eaed;
  font-size: 14.800px;
  white-space: nowrap;
}

.apps {
  width: 16px;
  height: 16px;
}

.apps-label {
  margin: 0 10px 0 12px;
  width: 33px;
}

.mark {
  width: 40px;
  flex: none;
  display: flex;
  align-items: center;
  padding-left: 10px;
  box-sizing: border-box;
}

.mark.wide {
  width: 55px;
}

.one {
  margin-left: 8px;
}

.named {
  width: 192.800px;
  flex: none;
  display: flex;
  align-items: center;
  gap: 10px;
  padding-left: 10px;
  box-sizing: border-box;
}

.more {
  margin-left: 25px;
  font-size: 16px;
}

/* page */
.page {
  flex: 1;
  min-height: 0;
  display: flex;
  background: #fafafa;
}

.rail {
  width: 80px;
  flex: none;
  background: #fff;
  box-shadow: 1px 0 4px rgba(0, 0, 0, 0.25);
  z-index: 2;
  display: flex;
  flex-direction: column;
}

.rail-logo {
  height: 88px;
  flex: none;
  box-sizing: border-box;
  border-bottom: 1px solid #e0e0e0;
  padding: 19px 0 0 15px;
}

.logo {
  display: block;
  width: 47px;
  height: 46px;
}

.rail-buttons {
  padding: 38px 0 25px 5px;
  border-bottom: 1px solid #e0e0e0;
  display: flex;
  flex-direction: column;
  align-items: flex-start;
  gap: 10px;
}

.rail-btn {
  padding: 11px 19px;
  border-radius: 4px;
  display: flex;
  background: #fff;
  box-shadow: 0 2px 3px rgba(0, 0, 0, 0.3), 0 0 2px rgba(0, 0, 0, 0.08);
}

.rail-icon {
  display: block;
  height: 24px;
  color: #212121;
}

.rail-list {
  padding: 44px 0 0 25px;
  display: flex;
  flex-direction: column;
  align-items: flex-start;
  gap: 46px;
}

.hbar {
  margin-top: auto;
  height: 20px;
  background: #f1f1f1;
  display: flex;
  align-items: center;
  padding: 0 8px;
  box-sizing: border-box;
}

.arrow-left {
  border: 5px solid transparent;
  border-left-width: 0;
  border-right: 6px solid #a3a3a3;
}

.hthumb {
  width: 37px;
  height: 15px;
  margin: 0 7px;
  background: #c1c1c1;
}

.arrow-right {
  border: 5px solid transparent;
  border-right-width: 0;
  border-left: 6px solid #505050;
}

.main {
  flex: 1;
  min-width: 0;
  display: flex;
  flex-direction: column;
}

.topbar {
  height: 85px;
  flex: none;
  box-sizing: border-box;
  background: #1074b9;
  border-bottom: 5px solid #5ba0ec;
  display: flex;
  align-items: center;
}

.toggle {
  width: 11px;
  height: 16px;
  margin-left: 39px;
}

.nav {
  display: flex;
  align-items: center;
  gap: 41px;
  margin-left: 60px;
}

.nav-item {
  display: flex;
  align-items: center;
  gap: 10px;
  font-size: 17.500px;
  font-weight: 500;
  color: rgba(255, 255, 255, 0.62);
  white-space: nowrap;
}

.nav-icon {
  height: 23px;
}

.actions {
  margin-left: auto;
  display: flex;
  align-items: center;
  color: #fff;
}

.act {
  height: 24px;
}

.search {
  margin-right: 33px;
}

.lang {
  position: relative;
  width: 80px;
  height: 53px;
  box-sizing: border-box;
  border-bottom: 2px solid #fff;
  display: flex;
  flex-direction: column;
  margin: 0 32px 5px 0;
}

.lang-label {
  font-size: 13px;
  line-height: 16px;
}

.lang-value {
  font-size: 18px;
  line-height: 24px;
  margin-top: 6px;
}

.caret {
  position: absolute;
  right: 5px;
  top: 21px;
  border: 6.500px solid transparent;
  border-top: 7px solid #fff;
  border-bottom: 0;
}

.fill {
  margin-right: 46px;
}

.bell {
  margin-right: 43px;
}

.person {
  width: 32px;
  height: 34px;
  margin-right: 29px;
}

.content {
  flex: 1;
  min-height: 0;
  overflow: hidden;
  padding: 38px 0 0 170px;
}

.crumbs {
  height: 34px;
  display: flex;
  align-items: center;
  margin-bottom: 41px;
}

.page-title {
  margin: 0;
  padding-right: 12px;
  height: 34px;
  line-height: 37px;
  font-size: 25px;
  font-weight: 400;
  color: #212121;
  border-right: 3px solid #111;
}

.crumb-home {
  margin: 3px 0 0 12px;
  font-size: 20px;
  color: #1a73d8;
}

.crumb-sep {
  margin: 3px 8px 0;
  font-size: 20px;
  color: #555;
}

.crumb-current {
  margin-top: 3px;
  font-size: 20px;
  color: #333;
}

.card {
  width: 1480px;
  box-sizing: border-box;
  background: #fff;
  border-radius: 4px;
  box-shadow: 0 0 2px rgba(0, 0, 0, 0.1);
  padding: 49px 0 0 45px;
  display: grid;
  grid-template-columns: 720px 1fr;
  grid-auto-rows: 90px;
}

.row {
  display: flex;
  align-items: flex-start;
}

.row-icon {
  width: 55px;
  flex: none;
  height: 25.600px;
  margin-top: 18px;
  color: #212121;
}

.row-title {
  font-size: 20px;
  line-height: 26px;
  color: #2a2a2a;
}

.row-sub {
  font-size: 17.500px;
  line-height: 26px;
  margin-top: 2px;
  color: #333;
}

.vbar {
  width: 21px;
  flex: none;
  background: #f1f1f1;
  display: flex;
  flex-direction: column;
  align-items: center;
  padding: 7px 0 6px;
  box-sizing: border-box;
}

.arrow-up {
  border: 6px solid transparent;
  border-top: 0;
  border-bottom: 6px solid #a3a3a3;
}

.vthumb {
  width: 17px;
  height: 722px;
  margin-top: 8px;
  background: #c1c1c1;
}

.arrow-down {
  margin-top: auto;
  border: 6px solid transparent;
  border-bottom: 0;
  border-top: 6px solid #505050;
}

.taskbar {
  height: 2px;
  flex: none;
  background: #202124;
}
</style>
